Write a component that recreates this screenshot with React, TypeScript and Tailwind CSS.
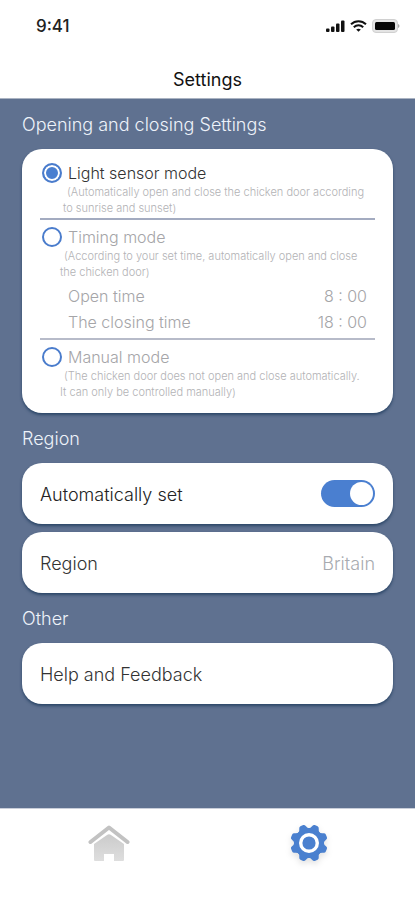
import { useState, type ReactNode } from "react";

function SignalIcon() {
  return (
    <svg width="19" height="14" viewBox="0 0 19 14" fill="#111" aria-hidden="true">
      <rect x="0" y="9.500" width="3.500" height="3.500" rx="1" />
      <rect x="5" y="7.500" width="3.500" height="5.500" rx="1" />
      <rect x="10" y="4.500" width="3.500" height="8.500" rx="1" />
      <rect x="15" y="1.500" width="3.500" height="11.500" rx="1" />
    </svg>
  );
}

function WifiIcon() {
  return (
    <svg width="17" height="14" viewBox="0 0 17 14" fill="none" stroke="#111" strokeWidth="2" aria-hidden="true">
      <path d="M1 5.2C5.2 1.1 11.8 1.1 16 5.2" />
      <path d="M3.8 8.3C6.5 5.7 10.5 5.7 13.2 8.3" />
      <path d="M6.2 10.6C7.5 9.4 9.5 9.4 10.8 10.6L8.5 12.8Z" fill="#111" stroke="none" />
    </svg>
  );
}

function BatteryIcon() {
  return (
    <svg width="28" height="14" viewBox="0 0 28 14" aria-hidden="true">
      <rect x="0.500" y="0.500" width="25" height="13" rx="3.5" fill="#e4e4e4" stroke="#d0d0d0" />
      <rect x="3" y="3" width="20" height="8" rx="1.5" fill="#050505" />
      <path d="M26 5C28 5.8 28 8.2 26 9Z" fill="#aaa" />
    </svg>
  );
}

function HomeIcon() {
  return (
    <svg width="42" height="38" viewBox="0 0 42 38" aria-hidden="true">
      <defs>
        <linearGradient id="house" x1="0" y1="0" x2="0" y2="1">
          <stop offset="0" stopColor="#cbcbcb" />
          <stop offset="1" stopColor="#dedede" />
        </linearGradient>
      </defs>
      <path d="M2.500 18L21 3.500L39.500 18" fill="none" stroke="#c2c2c2" strokeWidth="4" strokeLinecap="round" strokeLinejoin="round" />
      <path d="M6 20L19 11Q21 9.500 23 11L36 20V36Q36 37 35 37H26V30H16V37H7Q6 37 6 36Z" fill="url(#house)" />
    </svg>
  );
}

const TEETH = [22.5, 67.5, 112.5, 157.5, 202.5, 247.5, 292.5, 337.5];

function GearIcon() {
  return (
    <svg width="40" height="40" viewBox="0 0 40 40" className="drop-shadow-md" aria-hidden="true">
      <g fill="#4a80cf">
        <circle cx="20" cy="20" r="15" />
        {TEETH.map((angle) => (
          <path
            key={angle}
            transform={`rotate(${angle} 20 20)`}
            d="M13.500 7Q16 5.500 16.500 3Q17 1.200 18.500 1.200H21.500Q23 1.200 23.500 3Q24 5.500 26.500 7Z"
          />
        ))}
      </g>
      <circle cx="20" cy="20" r="8.300" fill="#4a80cf" stroke="#fff" strokeWidth="3.400" />
    </svg>
  );
}

function Card({ children }: { children: ReactNode }) {
  return <div className="rounded-[20px] bg-white px-[18px] shadow-[0_2px_3px_#1f3c5ecc]">{children}</div>;
}

function Heading({ children }: { children: ReactNode }) {
  return <h2 className="flex h-[50px] items-center pt-[2px] text-lg leading-6 text-[#eef3fa]">{children}</h2>;
}

type ModeProps = {
  id: string;
  label: string;
  lines: [string, string];
  indent?: string;
  checked: boolean;
  onSelect: (id: string) => void;
};

function Mode({ id, label, lines, indent = "pl-5", checked, onSelect }: ModeProps) {
  return (
    <>
      <label className={`flex h-[22px] items-center gap-[6px] pl-[2px] text-base ${checked ? "text-[#333]" : "text-[#a5a5a8]"}`}>
        <input
          type="radio"
          name="mode"
          checked={checked}
          onChange={() => onSelect(id)}
          className="size-5 shrink-0 appearance-none rounded-full border-2 border-[#4a7ccc] bg-white checked:bg-[#4a7fd0] checked:shadow-[inset_0_0_0_2px_white]"
        />
        {label}
      </label>
      <p className={`whitespace-nowrap text-[11px] leading-4 text-[#b2b2b5] ${indent}`}>
        <span className="pl-1">{lines[0]}</span>
        <br />
        {lines[1]}
      </p>
    </>
  );
}

function TimeRow({ label, value }: { label: string; value: string }) {
  return (
    <div className="flex h-[26px] items-center justify-between pl-7 pr-2 text-base text-[#a5a5a8]">
      <span>{label}</span>
      <time>{value}</time>
    </div>
  );
}

export default function App() {
  const [mode, setMode] = useState("light");
  const [auto, setAuto] = useState(true);

  return (
    <div className="flex min-h-screen flex-col bg-white font-['Inter',sans-serif] font-light">
      <header className="border-b border-[#aab3c2]">
        <div className="flex h-[52px] items-center justify-between pl-9 pr-[15px]">
          <span className="pt-[2px] text-[17px] font-medium text-[#222]">9:41</span>
          <div className="flex items-center gap-[5px]">
            <SignalIcon />
            <WifiIcon />
            <BatteryIcon />
          </div>
        </div>
        <h1 className="flex h-[46px] items-center justify-center pt-[10px] text-lg font-normal text-[#111]">Settings</h1>
      </header>

      <main className="flex-1 bg-[#5f7190] px-[22px]">
        <Heading>Opening and closing Settings</Heading>
        <Card>
          <div className="border-b-2 border-[#a3abc0] pb-[2px] pt-[13px]">
            <Mode
              id="light"
              label="Light sensor mode"
              lines={["(Automatically open and close the chicken door according", "to sunrise and sunset)"]}
              indent="pl-[23px]"
              checked={mode === "light"}
              onSelect={setMode}
            />
          </div>
          <div className="border-b-2 border-[#b7bbc9] pb-[3px] pt-[6px]">
            <Mode
              id="timing"
              label="Timing mode"
              lines={["(According to your set time, automatically open and close", "the chicken door)"]}
              checked={mode === "timing"}
              onSelect={setMode}
            />
            <div className="pt-[3px]">
              <TimeRow label="Open time" value="8 : 00" />
              <TimeRow label="The closing time" value="18 : 00" />
            </div>
          </div>
          <div className="pb-[13px] pt-[6px]">
            <Mode
              id="manual"
              label="Manual mode"
              lines={["(The chicken door does not open and close automatically.", "It can only be controlled manually)"]}
              checked={mode === "manual"}
              onSelect={setMode}
            />
          </div>
        </Card>

        <Heading>Region</Heading>
        <div className="flex flex-col gap-2">
          <Card>
            <label className="flex h-[61px] items-center justify-between text-lg text-[#222]">
              <span className="pt-[3px]">Automatically set</span>
              <input
                type="checkbox"
                role="switch"
                checked={auto}
                onChange={(e) => setAuto(e.target.checked)}
                className="flex h-[27px] w-[54px] appearance-none items-center rounded-full bg-gray-300 p-[2px] before:size-[23px] before:rounded-full before:bg-white checked:justify-end checked:bg-[#4a7fd0]"
              />
            </label>
          </Card>
          <Card>
            <button type="button" className="flex h-[61px] w-full items-center justify-between pt-[3px] text-lg text-[#333]">
              <span>Region</span>
              <span className="text-[#a8abb0]">Britain</span>
            </button>
          </Card>
        </div>

        <Heading>Other</Heading>
        <Card>
          <button type="button" className="flex h-[61px] w-full items-center pt-[3px] text-lg text-[#333]">
            Help and Feedback
          </button>
        </Card>
      </main>

      <nav className="grid h-[92px] grid-cols-2 border-t border-[#c9ceda] pl-[9px] pr-[6px]">
        <button type="button" aria-label="Home" className="flex justify-center pt-[15px]">
          <HomeIcon />
        </button>
        <button type="button" aria-label="Settings" className="flex justify-center pt-[14px]">
          <GearIcon />
        </button>
      </nav>
    </div>
  );
}
